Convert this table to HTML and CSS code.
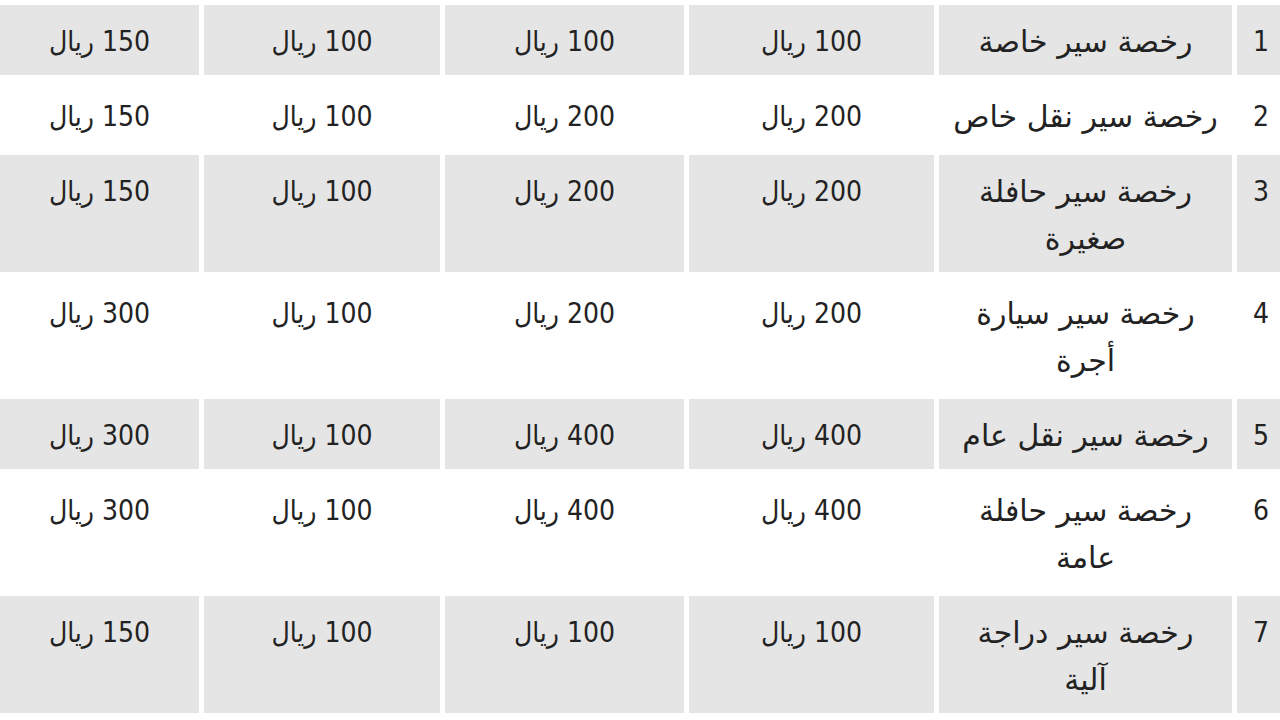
FILE: index.html
```html
<!DOCTYPE html>
<html lang="ar" dir="rtl">
<head>
<meta charset="utf-8">
<title>رسوم رخص السير</title>
<link rel="stylesheet" href="styles.css">
</head>
<body>
<table class="fees">
  <colgroup>
    <col class="c-num">
    <col class="c-name">
    <col class="c-d">
    <col class="c-c">
    <col class="c-b">
    <col class="c-a">
  </colgroup>
  <tbody>
    <tr class="odd">
      <td>1</td><td class="name">رخصة سير خاصة</td><td>100 ريال</td><td>100 ريال</td><td>100 ريال</td><td>150 ريال</td>
    </tr>
    <tr>
      <td>2</td><td class="name">رخصة سير نقل خاص</td><td>200 ريال</td><td>200 ريال</td><td>100 ريال</td><td>150 ريال</td>
    </tr>
    <tr class="odd">
      <td>3</td><td class="name">رخصة سير حافلة<br>صغيرة</td><td>200 ريال</td><td>200 ريال</td><td>100 ريال</td><td>150 ريال</td>
    </tr>
    <tr>
      <td>4</td><td class="name">رخصة سير سيارة<br>أجرة</td><td>200 ريال</td><td>200 ريال</td><td>100 ريال</td><td>300 ريال</td>
    </tr>
    <tr class="odd">
      <td>5</td><td class="name">رخصة سير نقل عام</td><td>400 ريال</td><td>400 ريال</td><td>100 ريال</td><td>300 ريال</td>
    </tr>
    <tr>
      <td>6</td><td class="name">رخصة سير حافلة<br>عامة</td><td>400 ريال</td><td>400 ريال</td><td>100 ريال</td><td>300 ريال</td>
    </tr>
    <tr class="odd">
      <td>7</td><td class="name">رخصة سير دراجة<br>آلية</td><td>100 ريال</td><td>100 ريال</td><td>100 ريال</td><td>150 ريال</td>
    </tr>
  </tbody>
</table>
</body>
</html>
```

FILE: styles.css
```css
html, body {
  margin: 0;
  padding: 0;
  background: #ffffff;
  overflow: hidden;
}

body {
  font-family: "DejaVu Sans Condensed", "DejaVu Sans", "Liberation Sans", sans-serif;
  font-size: 28px;
  color: #222222;
}

.fees {
  direction: rtl;
  table-layout: fixed;
  width: 1290px;
  border-collapse: separate;
  border-spacing: 5px;
  margin-left: -5px;
  margin-right: -10px;
  margin-top: 0;
}

.c-num { width: 48px; }
.c-name { width: 293px; }
.c-d { width: 245px; }
.c-c { width: 239px; }
.c-b { width: 236px; }
.c-a { width: 199px; }

.fees td {
  padding: 13px 0 10px 0;
  line-height: 47px;
  text-align: center;
  vertical-align: top;
  white-space: nowrap;
}

.fees td.name {
  font-family: "DejaVu Sans", "Liberation Sans", sans-serif;
  font-size: 30px;
}

.fees tr.odd td {
  background: #e5e5e5;
}
```
